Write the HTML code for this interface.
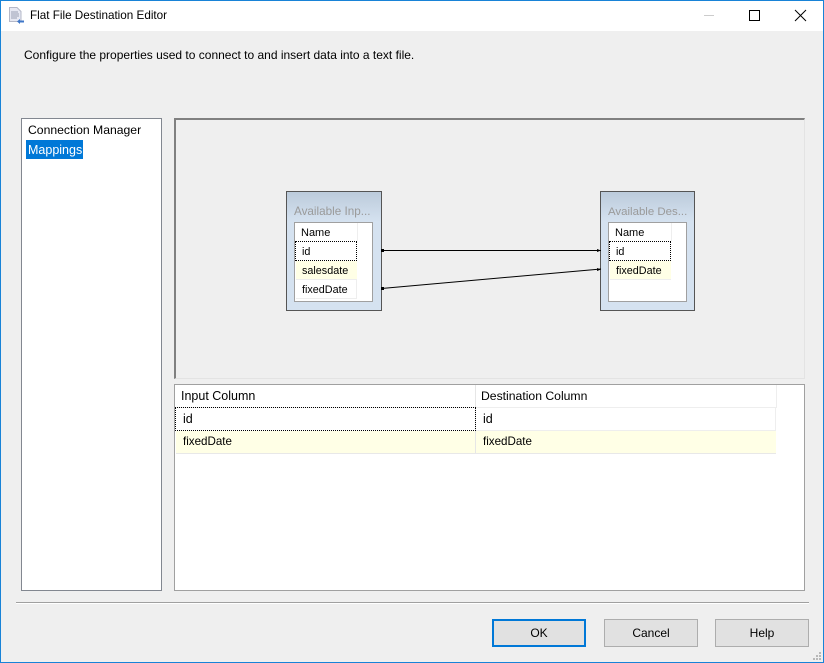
<!DOCTYPE html>
<html><head><meta charset="utf-8"><style>
html,body{margin:0;padding:0;width:824px;height:663px;overflow:hidden;background:#f0f0f0}
body{position:relative;font-family:"Liberation Sans",sans-serif;font-size:12px;color:#000}
div{position:absolute;box-sizing:border-box}
.t{white-space:nowrap;line-height:16px;height:16px}
.s{font-size:10.8px}
.btn{top:619px;width:94px;height:28px;background:#e1e1e1;border:1px solid #adadad;text-align:center;line-height:26px;font-size:12px}
</style></head><body>
<div style="left:0;top:0;width:824px;height:663px;border:1px solid #1883d7;background:#efefef"></div>
<div style="left:1px;top:1px;width:822px;height:30px;background:#fff"></div>
<svg style="position:absolute;left:8px;top:7px" width="18" height="18" viewBox="0 0 18 18"><path d="M1.500 .5H9L13 4.500V14.500H1.500Z" fill="#e6e8f2" stroke="#b4b8c8"/><path d="M3 5H10M3 7H11M3 9H11M3 11H9" stroke="#9aa0b4"/><path d="M9 14.500L12 12V13.500H16V15.500H12V17Z" fill="#3f77c8"/></svg>
<div class="t" style="left:30px;top:8px;font-size:11.700px">Flat File Destination Editor</div>
<div style="left:704px;top:15px;width:10px;height:1px;background:#ccc"></div>
<div style="left:749px;top:10px;width:11px;height:11px;border:1px solid #000"></div>
<svg style="position:absolute;left:794px;top:9px" width="13" height="13" viewBox="0 0 13 13"><path d="M1 1L12 12M12 1L1 12" stroke="#000" fill="none"/></svg>
<div class="t" style="left:24px;top:47px;font-size:12px">Configure the properties used to connect to and insert data into a text file.</div>

<div style="left:21px;top:118px;width:141px;height:473px;background:#fff;border:1px solid #828790"></div>
<div class="t" style="left:28px;top:122px;font-size:12.200px">Connection Manager</div>
<div style="left:26px;top:140px;width:57px;height:19px;background:#0078d7"></div>
<div class="t" style="left:28px;top:142px;color:#fff;font-size:12.500px">Mappings</div>

<div style="left:174px;top:118px;width:631px;height:261px;background:#efefef;border:1px solid #e3e3e3;border-top:2px solid #808080;border-left:2px solid #808080"></div>

<div style="left:286px;top:191px;width:96px;height:120px;border:1px solid #555;background:linear-gradient(#bccbdb 0,#d5e2f0 30px,#d5e2f0 100%)"></div>
<div class="t" style="left:294px;top:204px;color:#9a9a9a;font-size:11.700px">Available Inp...</div>
<div style="left:294px;top:222px;width:79px;height:80px;background:#fff;border:1px solid #a0a0a0"></div>
<div class="t s" style="left:301px;top:224px;font-size:11.500px;top:225px;font-size:11px">Name</div>
<div style="left:295px;top:241px;width:62px;height:20px;border:1px dotted #000;background:#fff"></div>
<div class="t s" style="left:302px;top:244px">id</div>
<div style="left:296px;top:261px;width:61px;height:19px;background:#ffffe6;border-bottom:1px solid #eee"></div>
<div class="t s" style="left:302px;top:263px">salesdate</div>
<div style="left:296px;top:280px;width:61px;height:19px;border-bottom:1px solid #eee;border-right:1px solid #eee"></div>
<div class="t s" style="left:302px;top:282px">fixedDate</div>
<div style="left:357px;top:223px;width:1px;height:18px;background:#eee"></div>

<div style="left:600px;top:191px;width:95px;height:120px;border:1px solid #555;background:linear-gradient(#bccbdb 0,#d5e2f0 30px,#d5e2f0 100%)"></div>
<div class="t" style="left:608px;top:204px;color:#9a9a9a;font-size:11.450px">Available Des...</div>
<div style="left:608px;top:222px;width:79px;height:80px;background:#fff;border:1px solid #a0a0a0"></div>
<div class="t" style="left:615px;top:225px;font-size:11px">Name</div>
<div style="left:609px;top:241px;width:62px;height:20px;border:1px dotted #000;background:#fff"></div>
<div class="t s" style="left:616px;top:244px">id</div>
<div style="left:610px;top:261px;width:61px;height:19px;background:#ffffe6;border-bottom:1px solid #eee"></div>
<div class="t s" style="left:616px;top:263px">fixedDate</div>
<div style="left:671px;top:223px;width:1px;height:18px;background:#eee"></div>

<svg style="position:absolute;left:375px;top:240px" width="235" height="55" viewBox="375 240 235 55">
<path d="M381.500 250.500H601" stroke="#000" fill="none"/>
<path d="M381.500 288.500L601 269" stroke="#000" fill="none"/>
<path d="M381 249h3v3h-3zM381 287h3v3h-3zM597 249l4 1.500-4 1.500zM597 268l4 1.500-4 1.500z" fill="#000"/>
</svg>

<div style="left:174px;top:384px;width:631px;height:207px;background:#fff;border:1px solid #a0a0a0"></div>
<div style="left:175px;top:385px;width:602px;height:23px;border-bottom:1px solid #eee;border-right:1px solid #eee"></div>
<div style="left:475px;top:385px;width:1px;height:68px;background:#e6e6e6"></div>
<div class="t" style="left:181px;top:388px;font-size:12.500px">Input Column</div>
<div class="t" style="left:481px;top:388px;font-size:12.200px">Destination Column</div>
<div style="left:175px;top:407px;width:301px;height:24px;border:1px dotted #000"></div>
<div style="left:476px;top:430px;width:300px;height:1px;background:#eee"></div>
<div style="left:476px;top:408px;width:300px;height:22px;border-right:1px solid #eee"></div>
<div style="left:176px;top:431px;width:600px;height:23px;background:#ffffe6;border-bottom:1px solid #e8e8e8"></div>
<div style="left:475px;top:431px;width:1px;height:22px;background:#e6e6e6"></div>
<div class="t" style="left:183px;top:411px;font-size:12.500px">id</div>
<div class="t" style="left:483px;top:411px;font-size:12.500px">id</div>
<div class="t" style="left:183px;top:434px;font-size:11.600px">fixedDate</div>
<div class="t" style="left:483px;top:434px;font-size:11.600px">fixedDate</div>

<div style="left:16px;top:602px;width:793px;height:1px;background:#a0a0a0"></div>
<div style="left:16px;top:603px;width:793px;height:1px;background:#fff"></div>
<div class="btn" style="left:492px;border:2px solid #0078d7;line-height:24px">OK</div>
<div class="btn" style="left:604px">Cancel</div>
<div class="btn" style="left:715px">Help</div>
<svg style="position:absolute;left:812px;top:651px" width="10" height="10" viewBox="0 0 10 10"><path d="M7 1h2v2H7zM4 4h2v2H4zM7 4h2v2H7zM1 7h2v2H1zM4 7h2v2H4zM7 7h2v2H7z" fill="#b8b8b8"/></svg>
</body></html>
